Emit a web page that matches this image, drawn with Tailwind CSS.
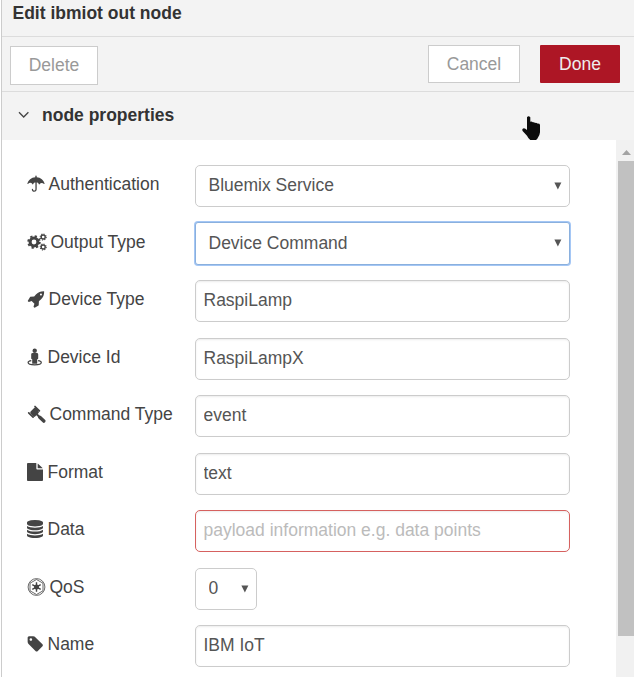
<!DOCTYPE html>
<html lang="en">
<head>
<meta charset="utf-8">
<title>Edit ibmiot out node</title>
<script src="https://cdn.jsdelivr.net/npm/@tailwindcss/browser@4"></script>
</head>
<body class="bg-white">
<div class="relative w-[634px] h-[677px] overflow-hidden bg-white pl-px text-[17.5px] leading-[22px] text-[#444] font-['Liberation_Sans',Arial,sans-serif]">
  <div class="h-full flex flex-col border-l border-[#ccc]">
    <header class="h-[37px] shrink-0 bg-[#f3f3f3] border-b border-[#dcdcdc] pl-[10.5px] pt-[2px] font-bold text-[#333]">Edit ibmiot out node</header>
    <div class="h-[55px] shrink-0 bg-[#f3f3f3] border-b border-[#dcdcdc] flex items-start pl-2 pr-[14px] pt-2">
      <button class="mt-px w-[88px] h-[39px] bg-white border border-[#ccc] text-[#999] pb-px">Delete</button>
      <button class="ml-auto w-[92px] h-[38px] bg-white border border-[#ccc] text-[#999]">Cancel</button>
      <button class="ml-5 w-20 h-[38px] rounded-[1px] bg-[#ad1625] text-[#eee]">Done</button>
    </div>
    <div class="h-12 shrink-0 bg-[#f3f3f3] flex items-start pl-4 pt-3 font-bold text-[#333]">
      <svg class="w-[12px] h-[8px] mt-[7px] mr-3" viewBox="0 0 12 8" fill="none" stroke="#444" stroke-width="1.3"><path d="M1 1.2 5.7 6 10.4 1.2"/></svg>
      node properties
    </div>
    <div class="flex flex-1 min-h-0">
      <main class="flex-1 pt-[25px] pl-[25px]">
        <div class="flex h-[57.5px]">
          <label class="w-[168px] flex pt-[8px]"><svg class="w-[18px] h-[18px] mt-[2px] mr-[3.5px]" viewBox="0 0 18 18" fill="#444"><path d="M8.300 2.300V1.300a.7.7 0 0 1 1.400 0v1c3.900.2 7.100 2.900 7.900 6.400.1.400-.3.500-.6.200-1.500-1.500-3.400-1.300-4.500.3-.2.300-.4.300-.6 0C11.200 8 10.400 7.600 9.700 7.600v6.700c0 3.300-4.900 3.300-4.900.2 0-.9 1.300-.9 1.300 0 0 1.500 2.300 1.500 2.300-.2V7.600c-.9 0-1.500.4-2.300 1.600-.2.300-.4.300-.6 0C4.300 7.500 2.500 7.300 1 8.900c-.3.300-.7.200-.6-.2.800-3.500 4-6.200 7.900-6.400z"/></svg>Authentication</label>
          <div class="relative w-[375px] h-[42px]"><select class="appearance-none w-full h-full border border-[#ccc] rounded-[5px] bg-white pl-[12.5px] pb-[2px] text-[#555]"><option>Bluemix Service</option></select><svg class="absolute right-[8px] top-[17px] w-2 h-2" viewBox="0 0 8 8" fill="#555"><path d="M.4.5h7L3.900 7.500z"/></svg></div>
        </div>
        <div class="flex h-[57.5px]">
          <label class="w-[168px] flex pt-[8px]"><svg class="w-5 h-[18px] mt-[2px] mr-[3.5px]" viewBox="0 0 20 18" fill="none" stroke="#444"><circle cx="7" cy="9" r="3.900" stroke-width="3"/><circle cx="7" cy="9" r="5.800" stroke-width="1.900" stroke-dasharray="2.278"/><circle cx="16.200" cy="4" r="2" stroke-width="1.400"/><circle cx="16.200" cy="4" r="3" stroke-width="1.100" stroke-dasharray="1.178"/><circle cx="16.200" cy="14" r="2" stroke-width="1.400"/><circle cx="16.200" cy="14" r="3" stroke-width="1.100" stroke-dasharray="1.178"/></svg>Output Type</label>
          <div class="relative -mt-[0.5px] w-[375px] h-[43px]"><select class="appearance-none w-full h-full border border-[#8ab0de] rounded-[3px] bg-white pl-[12.5px] pb-px text-[#555] shadow-[0_0_0_1px_#a5c7f5]"><option>Device Command</option></select><svg class="absolute right-[8px] top-[17px] w-2 h-2" viewBox="0 0 8 8" fill="#555"><path d="M.4.5h7L3.900 7.500z"/></svg></div>
        </div>
        <div class="flex h-[57.5px]">
          <label class="w-[168px] flex pt-[8px]"><svg class="w-[18px] h-[18px] mt-[2px] mr-[3.5px]" viewBox="0 0 1700 1792" fill="#444"><path d="M1440 448q0-40-28-68t-68-28-68 28-28 68 28 68 68 28 68-28 28-68zm224-288q0 249-75.500 430.500t-253.500 360.500q-81 80-195 176l-20 379q-2 16-16 26l-384 224q-7 4-16 4-12 0-23-9l-64-64q-13-14-8-32l85-276-281-281-276 85q-3 1-9 1-14 0-23-9l-64-64q-17-19-5-39l224-384q10-14 26-16l379-20q96-114 176-195 188-187 358-258t431-71q14 0 24 9.500t10 22.500z"/></svg>Device Type</label>
          <input class="w-[375px] h-[42px] border border-[#ccc] rounded-[5px] px-[7.5px] pb-[2px] text-[#555] shadow-[inset_0_1px_2px_rgba(0,0,0,0.075)]" value="RaspiLamp">
        </div>
        <div class="flex h-[57.5px]">
          <label class="w-[168px] flex pt-[8px]"><svg class="w-4 h-[19px] mt-[2px] mr-[4.5px]" viewBox="0 0 16 19"><circle cx="7.700" cy="2.700" r="2.200" fill="#444"/><path d="M5.700 5h4q1.500 0 1.500 1.300v4.200q0 .8-1 .8v3.900q0 .5-.5.5H5.700q-.5 0-.5-.5v-3.900q-1 0-1-.8V6.300Q4.200 5 5.700 5z" fill="#444"/><path d="M4.300 12.600C2.300 12.900 1.100 13.600 1.100 14.500c0 1.300 3 2.300 6.600 2.300s6.600-1 6.600-2.300c0-.9-1.200-1.600-3.200-1.900" fill="none" stroke="#444" stroke-width="1.200"/></svg>Device Id</label>
          <input class="w-[375px] h-[42.500px] border border-[#ccc] rounded-[5px] px-[7.5px] text-[#555] shadow-[inset_0_1px_2px_rgba(0,0,0,0.075)]" value="RaspiLampX">
        </div>
        <div class="flex h-[57.5px]">
          <label class="w-[168px] flex pt-[8px]"><svg class="w-[19px] h-[18px] mt-[2px] mr-[3.5px]" viewBox="0 0 19 18" stroke="#444" stroke-linecap="round"><path d="M4.500 7.500 8.500 3.500l2.200 3.600-3.500 3.500z" fill="#444" stroke-width="2.500" stroke-linejoin="round"/><path d="M8 1.500l4.400 4.400M1.700 7.800l4.400 4.400" stroke-width="1.700"/><path d="M9.500 9l3.500 3.500" stroke-width="2"/><path d="M12.800 12.300l4 3.800" stroke-width="3.400"/></svg>Command Type</label>
          <input class="w-[375px] h-[42px] border border-[#ccc] rounded-[5px] px-[7.5px] pb-[2px] text-[#555] shadow-[inset_0_1px_2px_rgba(0,0,0,0.075)]" value="event">
        </div>
        <div class="flex h-[57.5px]">
          <label class="w-[168px] flex pt-[8px]"><svg class="w-4 h-[18px] mt-[2px] mr-[4.5px]" viewBox="128 0 1536 1792" preserveAspectRatio="none" fill="#444"><path d="M1152 512v-472q22 14 36 28l408 408q14 14 28 36h-472zm-128 32q0 40 28 68t68 28h544v1056q0 40-28 68t-68 28h-1344q-40 0-68-28t-28-68v-1600q0-40 28-68t68-28h800v544z"/></svg>Format</label>
          <input class="w-[375px] h-[42.500px] border border-[#ccc] rounded-[5px] px-[7.5px] text-[#555] shadow-[inset_0_1px_2px_rgba(0,0,0,0.075)]" value="text">
        </div>
        <div class="flex h-[57.5px]">
          <label class="w-[168px] flex pt-[8px]"><svg class="w-4 h-[18px] mt-[2px] mr-[4.5px]" viewBox="128 0 1536 1792" preserveAspectRatio="none" fill="#444"><path d="M896 768q237 0 443-43t325-127v170q0 69-103 128t-280 93.500-385 34.500-385-34.500-280-93.500-103-128v-170q119 84 325 127t443 43zm0 768q237 0 443-43t325-127v170q0 69-103 128t-280 93.500-385 34.500-385-34.500-280-93.500-103-128v-170q119 84 325 127t443 43zm0-384q237 0 443-43t325-127v170q0 69-103 128t-280 93.500-385 34.500-385-34.500-280-93.500-103-128v-170q119 84 325 127t443 43zm0-1152q208 0 385 34.500t280 93.500 103 128v128q0 69-103 128t-280 93.500-385 34.500-385-34.500-280-93.500-103-128v-128q0-69 103-128t280-93.500 385-34.500z"/></svg>Data</label>
          <input class="w-[375px] h-[42px] border border-[#d6615f] rounded-[5px] px-[7.5px] pb-[2px] placeholder:text-[#bbb] shadow-[inset_0_1px_2px_rgba(0,0,0,0.075)]" placeholder="payload information e.g. data points">
        </div>
        <div class="flex h-[57.5px]">
          <label class="w-[168px] flex pt-[8px]"><svg class="w-[19px] h-[18px] mt-[2px] mr-[3.5px]" viewBox="0 0 19 18" fill="none" stroke="#444"><circle cx="9.500" cy="9" r="8.400" stroke-width=".8"/><path d="M9.500 1.500 16 5.200v7.600l-6.500 3.700L3 12.800V5.200z" stroke-width=".8"/><circle cx="9.500" cy="9" r="2.500" fill="#444" stroke="none"/><path d="M9.500 4.200v9.600M5.300 6.600l8.400 4.800M5.300 11.400l8.400-4.800" stroke-width="1.400"/></svg>QoS</label>
          <div class="relative w-[62px] h-[42.500px]"><select class="appearance-none w-full h-full border border-[#ccc] rounded-[5px] bg-white pl-[12.5px] pb-px text-[#555]"><option>0</option></select><svg class="absolute right-[8px] top-[17px] w-2 h-2" viewBox="0 0 8 8" fill="#555"><path d="M.4.5h7L3.900 7.500z"/></svg></div>
        </div>
        <div class="flex h-[52px]">
          <label class="w-[168px] flex pt-[8px]"><svg class="w-[18px] h-[18px] mt-[2px] mr-[2.5px]" viewBox="64 0 1792 1792" fill="#444"><path d="M576 448q0-53-37.500-90.500t-90.500-37.500-90.500 37.500-37.500 90.500 37.500 90.500 90.500 37.500 90.500-37.500 37.500-90.500zm1067 576q0 53-37 90l-491 492q-39 37-91 37-53 0-90-37l-715-716q-38-37-64.500-101t-26.500-117v-416q0-52 38-90t90-38h416q53 0 117 26.500t102 64.500l715 714q37 39 37 91z"/></svg>Name</label>
          <input class="w-[375px] h-[42px] border border-[#ccc] rounded-[5px] px-[7.5px] pb-[2px] text-[#555] shadow-[inset_0_1px_2px_rgba(0,0,0,0.075)]" value="IBM IoT">
        </div>
      </main>
      <div class="w-[18px] bg-[#f1f1f1] flex flex-col pl-[2px]">
        <div class="h-[21px] flex justify-center items-center pt-[3px]"><svg class="w-[9px] h-[5px]" viewBox="0 0 9 5" fill="#a3a3a3"><path d="M0 5 4.500 0 9 5z"/></svg></div>
        <div class="h-[475px] bg-[#c1c1c1]"></div>
      </div>
    </div>
  </div>
  <svg class="absolute left-[522px] top-[116px] w-[18px] h-6" viewBox="0 0 18 24" fill="#0b0b0b"><path d="M5 1.200Q6.500-.7 8.300 1.200V5.700q1.500-.6 2.500.6 1.500-.5 2.300.6 1.500-.3 2.200.7Q18 7.500 18 9v7.200q-.3 3-2 5.300-.7 1.600-2 2.500H8.300Q6 22 5 19.700L.6 15Q-.3 13 1.200 12.500q1.500-.7 3.800 1.500z"/></svg>
</div>
</body>
</html>
